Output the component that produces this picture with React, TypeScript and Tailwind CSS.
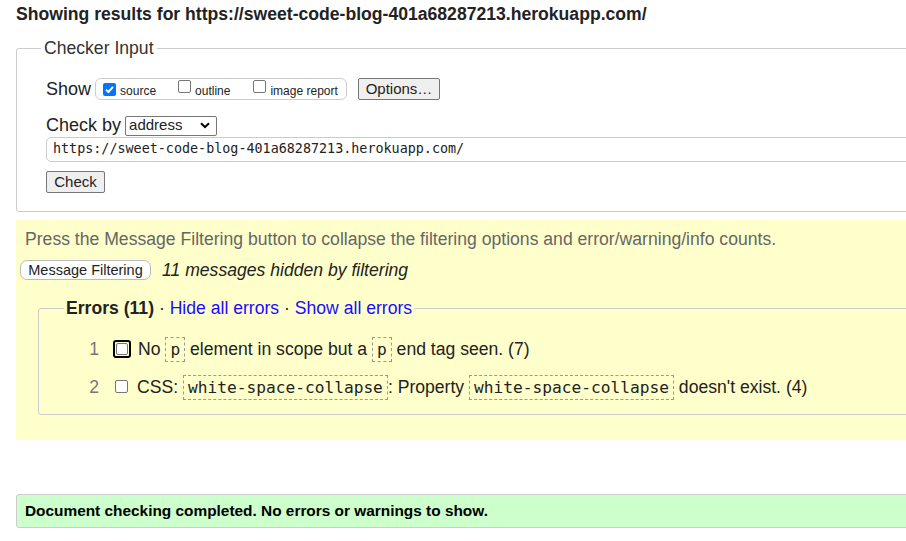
import React from "react";

const Box = ({ checked = false }: { checked?: boolean }) =>
  checked ? (
    <span className="inline-flex w-[13px] h-[13px] rounded-[2px] bg-[#0075ff] items-center justify-center">
      <svg width="11" height="11" viewBox="0 0 11 11">
        <path d="M2 5.6 L4.4 8 L9 2.8" stroke="#fff" strokeWidth="1.9" fill="none" />
      </svg>
    </span>
  ) : (
    <span className="inline-block w-[13px] h-[13px] rounded-[2px] border border-[#767676] bg-white" />
  );

const Code = ({ children }: { children: React.ReactNode }) => (
  <code className="inline-block border border-dashed border-[#999] px-[4px] leading-[23px] text-[16.2px] [font-family:'DejaVu_Sans_Mono',monospace]">
    {children}
  </code>
);

export default function App() {
  return (
    <div className="w-[906px] h-[541px] overflow-hidden bg-white text-[#222] [font-family:'Liberation_Sans',Arial,sans-serif]">
      <div className="w-[1000px]">
        <h2 className="pl-4 pt-[3px] text-[17.6px] font-bold leading-[22px] text-[#222]">
          Showing results for https://sweet-code-blog-401a68287213.herokuapp.com/
        </h2>

        <fieldset className="ml-4 mt-[13px] border border-[#ccc] rounded-[3px] px-0 pb-[17px] pt-0">
          <legend className="ml-[24px] px-[3px] text-[17.6px] leading-[20px] text-[#333]">Checker Input</legend>
          <div className="pl-[29px]">
            <div className="flex items-center mt-[19px] h-[24px]">
              <span className="text-[18px]">Show</span>
              <div className="ml-[4px] flex items-center h-[22px] w-[252px] border border-[#ccc] rounded-[6px] pl-[7px] text-[12px]">
                <Box checked />
                <span className="ml-[4px] mt-[3px]">source</span>
                <span className="ml-[22px]"><Box /></span>
                <span className="ml-[4px] mt-[3px]">outline</span>
                <span className="ml-[23px]"><Box /></span>
                <span className="ml-[4px] mt-[3px]">image report</span>
              </div>
              <button className="ml-[11px] h-[22px] w-[82px] border border-[#767676] rounded-[2px] bg-[#efefef] text-[15px] leading-[20px]">
                Options…
              </button>
            </div>
            <div className="flex items-center mt-[14px] h-[21px]">
              <span className="text-[18px]">Check by</span>
              <div className="ml-[4px] flex items-center justify-between h-[20px] w-[92px] border border-[#767676] rounded-[2px] bg-white pl-[3px] pr-[6px] text-[15px]">
                <span>address</span>
                <svg width="10" height="7" viewBox="0 0 10 7">
                  <path d="M1 1.2 L5 5 L9 1.2" stroke="#000" strokeWidth="2" fill="none" />
                </svg>
              </div>
            </div>
            <div className="mt-[1px] h-[25px] border border-[#ccc] rounded-[5px] flex items-center pl-[6px] text-[13.4px] [font-family:'DejaVu_Sans_Mono',monospace]">
              https://sweet-code-blog-401a68287213.herokuapp.com/
            </div>
            <button className="mt-[9px] h-[22px] w-[59px] border border-[#767676] rounded-[2px] bg-[#efefef] text-[15px] leading-[20px]">
              Check
            </button>
          </div>
        </fieldset>

        <div className="ml-4 mt-[8px] h-[220px] bg-[#ffffcc] pt-[9px]">
          <p className="pl-[9px] text-[17.6px] leading-[20px] text-[#666]">
            Press the Message Filtering button to collapse the filtering options and error/warning/info counts.
          </p>
          <div className="flex items-center mt-[8px] pl-[4px]">
            <button className="h-[20px] w-[131px] border border-[#bbb] rounded-[7px] bg-white text-[14.5px] leading-[18px]">
              Message Filtering
            </button>
            <span className="ml-[11px] text-[17.6px] italic">11 messages hidden by filtering</span>
          </div>
          <fieldset className="ml-[22px] mt-[15px] border border-[#ccc] rounded-[3px] h-[117px] pt-0">
            <legend className="ml-[25px] px-[2px] text-[17.6px] leading-[20px]">
              <b>Errors (11)</b>
              <span> · </span>
              <a className="text-[#1a0dff]">Hide all errors</a>
              <span> · </span>
              <a className="text-[#1a0dff]">Show all errors</a>
            </legend>
            <div className="flex items-center mt-[18px] h-[26px] text-[17.6px]">
              <span className="w-[60px] text-right text-[#777]">1</span>
              <span className="ml-[14px] w-[18px] h-[18px] rounded-[3px] border-2 border-black flex items-center justify-center">
                <span className="w-[12px] h-[12px] rounded-[2px] border border-[#767676] bg-white" />
              </span>
              <span className="ml-[7px] whitespace-pre">No </span>
              <Code>p</Code>
              <span className="whitespace-pre"> element in scope but a </span>
              <Code>p</Code>
              <span className="whitespace-pre"> end tag seen. (7)</span>
            </div>
            <div className="flex items-center mt-[12px] h-[26px] text-[17.6px]">
              <span className="w-[60px] text-right text-[#777]">2</span>
              <span className="ml-[16px]"><Box /></span>
              <span className="ml-[9px] whitespace-pre">CSS: </span>
              <Code>white-space-collapse</Code>
              <span className="whitespace-pre">: Property </span>
              <Code>white-space-collapse</Code>
              <span className="whitespace-pre"> doesn't exist. (4)</span>
            </div>
          </fieldset>
        </div>

        <div className="ml-4 mt-[54px] h-[34px] bg-[#ccffcc] border border-[#ccc] rounded-[3px] flex items-center pl-[8px] text-[15.4px] font-bold text-black">
          Document checking completed. No errors or warnings to show.
        </div>
      </div>
    </div>
  );
}
